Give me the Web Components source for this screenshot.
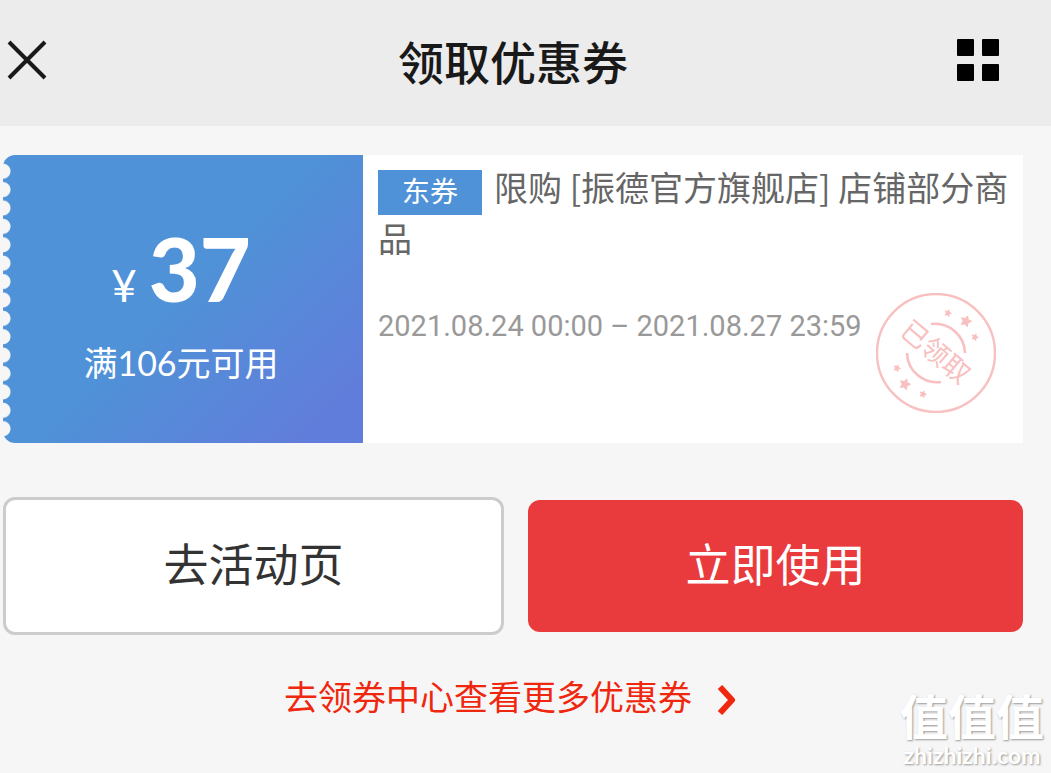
<!DOCTYPE html>
<html lang="zh-CN">
<head>
<meta charset="utf-8">
<meta name="viewport" content="width=device-width, initial-scale=1">
<title>领取优惠券</title>
<style>
  html { background: #f6f6f6; }
  body { margin: 0; font-family: "Noto Sans CJK SC", sans-serif; }
</style>
</head>
<body>
<coupon-page>
  <page-header slot="header">领取优惠券</page-header>
  <coupon-card amount="37" condition="满106元可用" tag="东券" period="2021.08.24 00:00 – 2021.08.27 23:59">限购 [振德官方旗舰店] 店铺部分商品<received-stamp slot="stamp"></received-stamp></coupon-card>
  <action-bar>
    <action-button>去活动页</action-button>
    <action-button primary>立即使用</action-button>
  </action-bar>
  <more-link href="#coupons">去领券中心查看更多优惠券</more-link>
  <site-watermark slot="overlay"></site-watermark>
</coupon-page>

<script>
function define(name, render) {
  customElements.define(name, class extends HTMLElement {
    constructor() {
      super();
      this.attachShadow({ mode: 'open' });
    }
    connectedCallback() {
      const template = document.createElement('template');
      template.innerHTML = render(this);
      this.shadowRoot.replaceChildren(template.content.cloneNode(true));
    }
  });
}

define('coupon-page', () => `
  <style>
    :host { display: block; position: relative; min-height: 100vh; background: #f6f6f6; }
    main { padding: 29px 28px 0 3px; }
  </style>
  <slot name="header"></slot>
  <main><slot></slot></main>
  <slot name="overlay"></slot>`);

define('page-header', () => `
  <style>
    :host { display: block; background: #ececec; color: #191919; }
    header { display: grid; grid-template-columns: 1fr auto 1fr; align-items: center; padding: 24px 28px 30px 3px; }
    h1 { margin: 0; font-size: 46px; line-height: 72px; font-weight: 500; }
    button { display: block; padding: 0; border: 0; background: none; color: inherit; }
    svg { display: block; }
    .close { justify-self: start; margin-left: 3px; }
    .menu { justify-self: end; margin-right: 24px; color: #000; }
  </style>
  <header>
    <button class="close" type="button" aria-label="关闭">
      <svg width="42" height="42" viewBox="0 0 42 42" fill="none" stroke="currentColor" stroke-width="4"><path d="M3 3l36 36M39 3L3 39"/></svg>
    </button>
    <h1><slot></slot></h1>
    <button class="menu" type="button" aria-label="菜单">
      <svg width="42" height="42" viewBox="0 0 42 42" fill="currentColor"><rect width="17" height="17" rx="1"/><rect x="25" width="17" height="17" rx="1"/><rect y="25" width="17" height="17" rx="1"/><rect x="25" y="25" width="17" height="17" rx="1"/></svg>
    </button>
  </header>`);

define('coupon-card', el => `
  <style>
    :host { display: block; }
    article { display: flex; min-height: 288px; background: #fff; border-top-left-radius: 12px; border-bottom-left-radius: 12px; }
    .stub {
      position: relative; flex: 0 0 360px; display: flex; flex-direction: column; align-items: center; justify-content: center;
      box-sizing: border-box; padding: 4px 4px 0 0;
      color: #fff; font-family: Lato, "Noto Sans CJK SC", sans-serif;
      background: linear-gradient(135deg, #4f92d7 48%, #617ddb 90%);
      border-top-left-radius: 12px; border-bottom-left-radius: 12px;
    }
    .stub::before {
      content: ""; position: absolute; left: 0; top: 7px; bottom: 5px; width: 8px;
      background: radial-gradient(circle at 0 50%, #f6f6f6 7px, transparent 8px) 0 0 / 8px 18px;
      background-repeat: round;
    }
    .price { display: flex; align-items: baseline; gap: 12px; margin: 0; line-height: 106px; }
    .sign { font-size: 44px; }
    .amount { font-size: 88px; font-weight: 900; }
    .condition { margin: 0; font-size: 34px; line-height: 50px; }
    .info { flex: 1; min-width: 0; padding: 6px 0 0 15px; }
    h2 { margin: 0; font-size: 34px; line-height: 51px; font-weight: 400; color: #666; }
    .tag { float: left; margin: 9px 12px -6px 0; padding: 0 24px 4px; font-size: 28px; line-height: 41px; color: #fff; background: #4f92d7; }
    .row { display: flex; justify-content: space-between; align-items: flex-start; margin-top: 30px; padding-right: 27px; }
    time { font: 29px/66px Roboto, "Noto Sans CJK SC", sans-serif; color: #999; white-space: nowrap; }
  </style>
  <article>
    <div class="stub">
      <p class="price"><span class="sign">¥</span><span class="amount">${el.getAttribute('amount')}</span></p>
      <p class="condition">${el.getAttribute('condition')}</p>
    </div>
    <div class="info">
      <h2><span class="tag">${el.getAttribute('tag')}</span><slot></slot></h2>
      <div class="row"><time>${el.getAttribute('period')}</time><slot name="stamp"></slot></div>
    </div>
  </article>`);

define('received-stamp', () => {
  const star = (x, y, size) => `<path transform="translate(${x} ${y}) rotate(20) scale(${size})" d="M0-10L3-4 10-3 5 2 6 9 0 6-6 9-5 2-10-3-3-4Z"/>`;
  return `
  <style>
    :host { display: block; flex: none; }
    svg { display: block; }
    text { font: 400 27px "Noto Sans CJK SC", sans-serif; }
  </style>
  <svg width="120" height="120" viewBox="0 0 120 120" fill="#f8c0c0">
    <g fill="none" stroke="#f8c0c0">
      <circle cx="60" cy="60" r="59" stroke-width="2.4"/>
      <path d="M55 31A30 30 0 0 1 89 60M31 60A30 30 0 0 0 65 89" stroke-width="2.6"/>
    </g>
    ${star(72, 20, .4)}${star(90, 28, .62)}${star(99, 44, .4)}
    ${star(21, 75, .4)}${star(29, 91, .62)}${star(47, 101, .4)}
    <text x="59" y="69" text-anchor="middle" transform="rotate(40 60 60)">已领取</text>
  </svg>`;
});

define('action-bar', () => `
  <style>
    :host { display: flex; align-items: center; gap: 24px; margin-top: 54px; }
  </style>
  <slot></slot>`);

define('action-button', () => `
  <style>
    :host { flex: 1 1 0; border: 3px solid #ccc; border-radius: 12px; background: #fff; color: #333; overflow: hidden; }
    :host([primary]) { border: 0; background: #e93a3d; color: #fff; }
    button { display: block; width: 100%; padding: 0 0 6px; border: 0; background: none; color: inherit; font: 45px/126px "Noto Sans CJK SC", sans-serif; }
  </style>
  <button type="button"><slot></slot></button>`);

define('more-link', el => `
  <style>
    :host { display: flex; justify-content: center; margin-top: 36px; padding-right: 6px; }
    a { display: flex; align-items: center; gap: 26px; font-size: 34px; line-height: 50px; color: #f0270f; text-decoration: none; }
    svg { display: block; margin-top: 8px; }
  </style>
  <a href="${el.getAttribute('href')}"><slot></slot>
    <svg width="18" height="30" viewBox="0 0 18 30" fill="none" stroke="currentColor" stroke-width="6" stroke-linejoin="round"><path d="M2 2L14 15 2 28"/></svg>
  </a>`);

define('site-watermark', () => `
  <style>
    :host { position: absolute; right: 7px; bottom: 5px; display: flex; flex-direction: column; align-items: center; gap: 3px; color: #fff; text-shadow: 1px 1px 2px #999; pointer-events: none; }
    .name { font-size: 48px; line-height: 50px; font-weight: 700; }
    .site { font: 700 23px/26px Lato, sans-serif; }
  </style>
  <span class="name">值值值</span>
  <span class="site">zhizhizhi.com</span>`);
</script>
</body>
</html>
